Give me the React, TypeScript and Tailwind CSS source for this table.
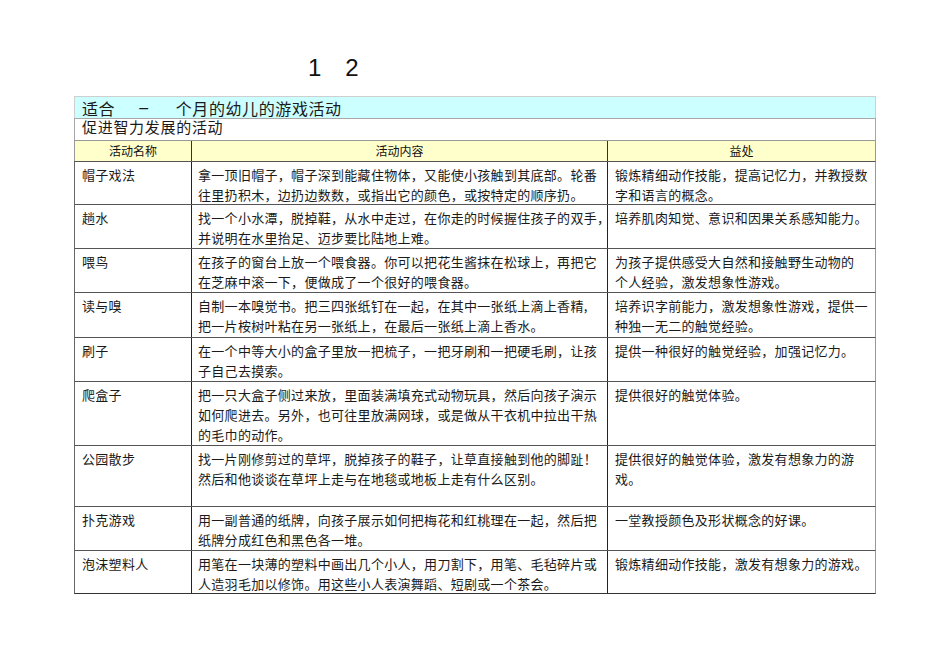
import React from "react";

type Row = {
  name: string;
  content: string[];
  benefit: string[];
  h: string;
};

const rows: Row[] = [
  {
    name: "帽子戏法",
    content: [
      "拿一顶旧帽子，帽子深到能藏住物体，又能使小孩触到其底部。轮番",
      "往里扔积木，边扔边数数，或指出它的颜色，或按特定的顺序扔。",
    ],
    benefit: ["锻炼精细动作技能，提高记忆力，并教授数", "字和语言的概念。"],
    h: "h-[43px]",
  },
  {
    name: "趟水",
    content: [
      "找一个小水潭，脱掉鞋，从水中走过，在你走的时候握住孩子的双手，",
      "并说明在水里抬足、迈步要比陆地上难。",
    ],
    benefit: ["培养肌肉知觉、意识和因果关系感知能力。"],
    h: "h-[44px]",
  },
  {
    name: "喂鸟",
    content: [
      "在孩子的窗台上放一个喂食器。你可以把花生酱抹在松球上，再把它",
      "在芝麻中滚一下，便做成了一个很好的喂食器。",
    ],
    benefit: ["为孩子提供感受大自然和接触野生动物的", "个人经验，激发想象性游戏。"],
    h: "h-[44px]",
  },
  {
    name: "读与嗅",
    content: [
      "自制一本嗅觉书。把三四张纸钉在一起，在其中一张纸上滴上香精,",
      "把一片桉树叶粘在另一张纸上，在最后一张纸上滴上香水。",
    ],
    benefit: ["培养识字前能力，激发想象性游戏，提供一", "种独一无二的触觉经验。"],
    h: "h-[45px]",
  },
  {
    name: "刷子",
    content: [
      "在一个中等大小的盒子里放一把梳子，一把牙刷和一把硬毛刷，让孩",
      "子自己去摸索。",
    ],
    benefit: ["提供一种很好的触觉经验，加强记忆力。"],
    h: "h-[44px]",
  },
  {
    name: "爬盒子",
    content: [
      "把一只大盒子侧过来放，里面装满填充式动物玩具，然后向孩子演示",
      "如何爬进去。另外，也可往里放满网球，或是做从干衣机中拉出干热",
      "的毛巾的动作。",
    ],
    benefit: ["提供很好的触觉体验。"],
    h: "h-[64px]",
  },
  {
    name: "公园散步",
    content: [
      "找一片刚修剪过的草坪，脱掉孩子的鞋子，让草直接触到他的脚趾！",
      "然后和他谈谈在草坪上走与在地毯或地板上走有什么区别。",
    ],
    benefit: ["提供很好的触觉体验，激发有想象力的游", "戏。"],
    h: "h-[61px]",
  },
  {
    name: "扑克游戏",
    content: [
      "用一副普通的纸牌，向孩子展示如何把梅花和红桃理在一起，然后把",
      "纸牌分成红色和黑色各一堆。",
    ],
    benefit: ["一堂教授颜色及形状概念的好课。"],
    h: "h-[44px]",
  },
  {
    name: "泡沫塑料人",
    content: [
      "用笔在一块薄的塑料中画出几个小人，用刀割下，用笔、毛毡碎片或",
      "人造羽毛加以修饰。用这些小人表演舞蹈、短剧或一个茶会。",
    ],
    benefit: ["锻炼精细动作技能，激发有想象力的游戏。"],
    h: "h-[44px]",
  },
];

const Lines = ({ lines }: { lines: string[] }) => (
  <>
    {lines.map((l, i) => (
      <div key={i} className="whitespace-nowrap">
        {l}
      </div>
    ))}
  </>
);

export default function App() {
  return (
    <div className="w-[950px] h-[672px] bg-white text-[#1a1a1a] font-['Noto_Sans_CJK_SC',sans-serif]">
      {/* page number */}
      <div className="h-[96px] pt-[54px] pl-[308px] flex gap-[24px] text-[24px] leading-[28px] font-['Liberation_Sans',sans-serif] text-[#111]">
        <span>1</span>
        <span>2</span>
      </div>

      <div className="ml-[74px] w-[802px]">
        <div className="h-[22px] flex items-center pl-[7px] bg-[#ccffff] border-t border-x border-[#cfcfcf] text-[16px] tracking-[0.6px] leading-[18px]">
          <span>适合</span>
          <span className="ml-[24px] font-['Liberation_Sans',sans-serif]">–</span>
          <span className="ml-[27px]">个月的幼儿的游戏活动</span>
        </div>
        <div className="h-[22px] pl-[7px] pt-[1px] border-t border-x border-[#a8a8a8] text-[15px] tracking-[0.7px] leading-[14px]">
          促进智力发展的活动
        </div>
        <div className="h-[21px] flex bg-[#ffffcc] border-t border-[#999] border-x text-[12px] leading-[20px] text-[#111]">
          <div className="w-[117px] text-center border-r border-[#333]">活动名称</div>
          <div className="w-[416px] text-center border-r border-[#333]">活动内容</div>
          <div className="flex-1 text-center">益处</div>
        </div>

        {rows.map((r, i) => (
          <div
            key={i}
            className={`${r.h} flex border-t border-[#555] border-l border-l-[#666] border-r border-r-[#999] text-[13px] tracking-[0.3px] leading-[20px] ${
              i === rows.length - 1 ? "border-b border-b-[#333]" : ""
            }`}
          >
            <div className="w-[117px] shrink-0 pl-[7px] pt-[3px] border-r border-[#222]">{r.name}</div>
            <div className="w-[416px] shrink-0 pl-[6px] pt-[3px] border-r border-[#222]">
              <Lines lines={r.content} />
            </div>
            <div className="flex-1 pl-[7px] pt-[3px]">
              <Lines lines={r.benefit} />
            </div>
          </div>
        ))}
      </div>
    </div>
  );
}
